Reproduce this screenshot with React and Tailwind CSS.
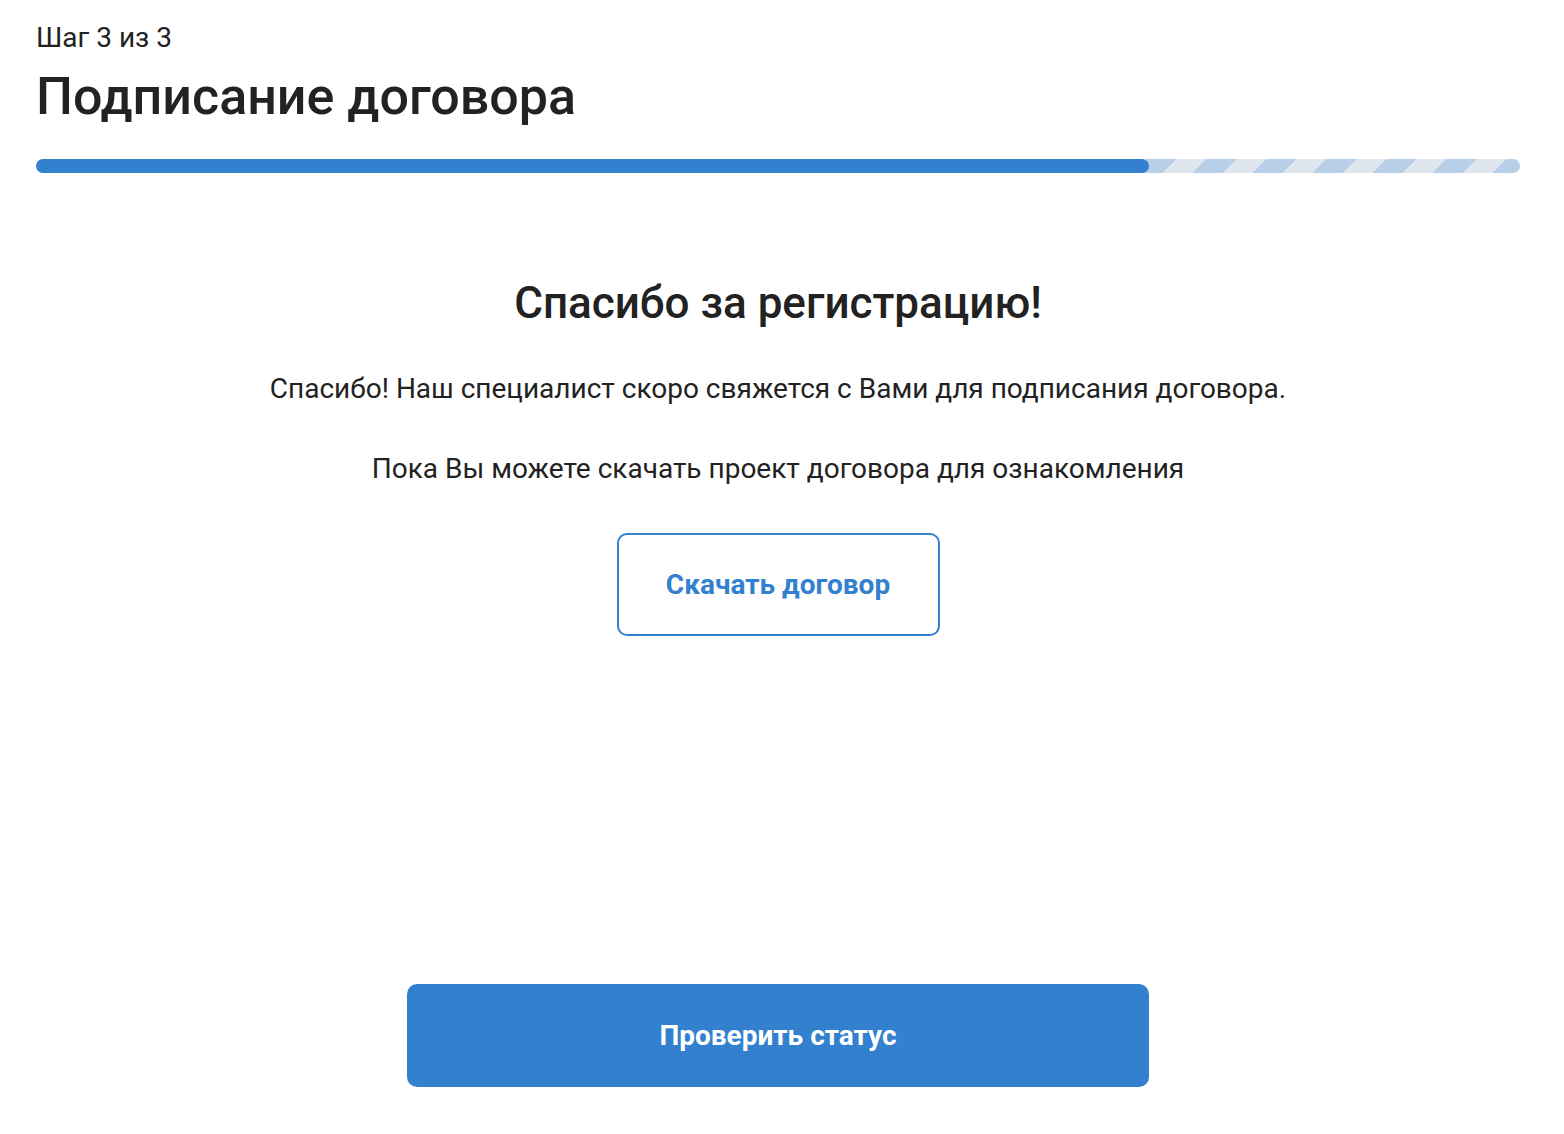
import React from 'react';

const App = () => {
  return (
    <div
      className="min-h-[1134px] bg-white pl-9 pr-11 pt-[22px] pb-[47px] flex flex-col text-[#222222]"
      style={{ fontFamily: 'Roboto, "Noto Sans", sans-serif' }}
    >
      {/* Header */}
      <p className="text-[28px] leading-[32px]">Шаг 3 из 3</p>
      <h1 className="text-[52px] leading-[60px] font-medium mt-[13px]">Подписание договора</h1>

      {/* Progress */}
      <div className="mt-[32px] h-[14px] w-full rounded-full bg-[repeating-linear-gradient(135deg,#dfe6ee_0_21.21px,#b8cfe8_21.21px_42.43px)]">
        <div className="h-full w-3/4 rounded-full bg-[#3380cf]" />
      </div>

      {/* Content */}
      <div className="flex flex-col items-center text-center mt-[106px]">
        <h2 className="text-[44px] leading-[48px] font-medium">Спасибо за регистрацию!</h2>
        <p className="text-[28px] leading-[34px] mt-[45px]">
          Спасибо! Наш специалист скоро свяжется с Вами для подписания договора.
        </p>
        <p className="text-[28px] leading-[34px] mt-[46px]">
          Пока Вы можете скачать проект договора для ознакомления
        </p>
        <button className="mt-[47px] w-[323px] h-[103px] rounded-[10px] border-2 border-[#3380cf] text-[#3380cf] text-[28px] font-bold">
          Скачать договор
        </button>
      </div>

      {/* Footer action */}
      <div className="mt-auto flex justify-center">
        <button className="w-[742px] h-[103px] rounded-[10px] bg-[#3380cf] text-white text-[28px] font-bold">
          Проверить статус
        </button>
      </div>
    </div>
  );
};

export default App;
